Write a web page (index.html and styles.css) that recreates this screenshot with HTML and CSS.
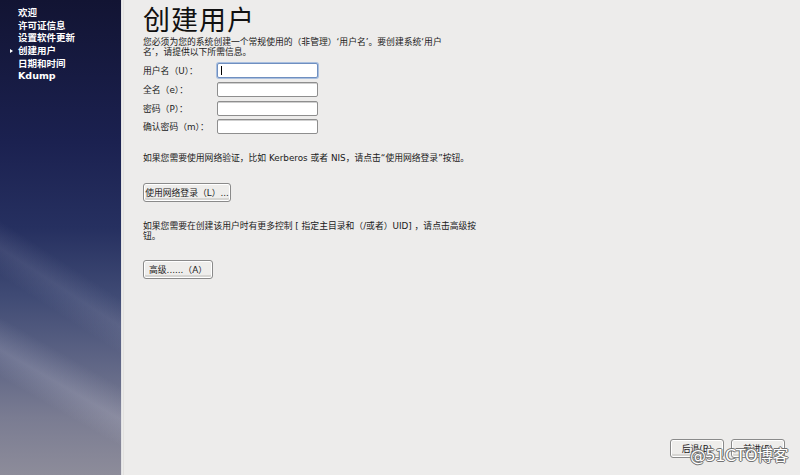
FILE: index.html
```
<!DOCTYPE html>
<html lang="zh-CN">
<head>
<meta charset="utf-8">
<title>创建用户</title>
<link rel="stylesheet" href="styles.css">
</head>
<body>
<div class="screen">
  <aside class="sidebar">
    <ul class="steps">
      <li class="step">欢迎</li>
      <li class="step">许可证信息</li>
      <li class="step">设置软件更新</li>
      <li class="step current">创建用户</li>
      <li class="step">日期和时间</li>
      <li class="step">Kdump</li>
    </ul>
  </aside>
  <div class="divider"></div>
  <main class="content">
    <h1 class="title">创建用户</h1>
    <p class="intro">您必须为您的系统创建一个常规使用的（非管理）‘用户名’。要创建系统‘用户<br>名’，请提供以下所需信息。</p>
    <div class="form">
      <div class="row"><label class="label">用户名（U）：</label><div class="input focus"><span class="caret"></span></div></div>
      <div class="row"><label class="label">全名（e）：</label><div class="input"></div></div>
      <div class="row"><label class="label">密码（P）：</label><div class="input"></div></div>
      <div class="row"><label class="label">确认密码（m）：</label><div class="input"></div></div>
    </div>
    <p class="note note-net">如果您需要使用网络验证，比如 Kerberos 或者 NIS，请点击“使用网络登录”按钮。</p>
    <div class="btn btn-net">使用网络登录（L）...</div>
    <p class="note note-adv">如果您需要在创建该用户时有更多控制 [ 指定主目录和（/或者）UID] ，请点击高级按<br>钮。</p>
    <div class="btn btn-adv">高级......（A）</div>
    <div class="nav">
      <div class="btn btn-nav">后退(B)</div>
      <div class="btn btn-nav">前进(F)</div>
    </div>
    <div class="watermark">@51CTO博客</div>
  </main>
</div>
</body>
</html>
```
FILE: styles.css
```
* { box-sizing: border-box; }
html, body { margin: 0; padding: 0; }
body {
  width: 800px;
  height: 475px;
  overflow: hidden;
  font-family: "DejaVu Sans", "Noto Sans CJK SC", sans-serif;
  background: #edeceb;
}
.screen {
  display: flex;
  width: 800px;
  height: 475px;
}
.sidebar {
  width: 121px;
  flex: none;
  background:
    linear-gradient(30deg, transparent 18%, rgba(205,205,220,0.20) 23%, transparent 29%),
    linear-gradient(33deg, transparent 36%, rgba(190,190,210,0.12) 41%, transparent 46%),
    linear-gradient(180deg, #121433 0%, #1b2150 30%, #263060 48%, #3f4a74 62%, #5c6384 75%, #7a7c92 88%, #8d8c9a 100%);
  padding-top: 7px;
}
.steps {
  list-style: none;
  margin: 0;
  padding: 0 0 0 18px;
}
.step {
  position: relative;
  color: #ffffff;
  font-weight: bold;
  font-size: 9.5px;
  line-height: 12.7px;
  height: 12.7px;
}
.step.current::before {
  content: "";
  position: absolute;
  left: -8px;
  top: 4px;
  border-left: 3px solid #ffffff;
  border-top: 2.5px solid transparent;
  border-bottom: 2.5px solid transparent;
}
.divider {
  width: 3px;
  flex: none;
  background: linear-gradient(90deg, #c9c9cc 0, #fbfbfb 1px, #dedddb 2px, #e6e5e3 3px);
}
.content {
  position: relative;
  flex: 1;
  display: flex;
  flex-direction: column;
  align-items: flex-start;
  padding: 1px 15px 17px 19px;
  color: #1a1a1a;
}
.title {
  margin: 0;
  font-family: "Noto Sans CJK SC", "DejaVu Sans", sans-serif;
  font-weight: normal;
  font-size: 27px;
  line-height: 35px;
  color: #111111;
  letter-spacing: 1px;
}
.intro {
  margin: 1px 0 0 0;
  font-size: 8.8px;
  line-height: 10px;
}
.form {
  margin-top: 6px;
  display: flex;
  flex-direction: column;
  gap: 3.8px;
}
.row {
  display: flex;
  align-items: center;
  height: 15px;
}
.label {
  width: 74px;
  font-size: 8.8px;
}
.input {
  position: relative;
  width: 101px;
  height: 15px;
  background: #ffffff;
  border: 1px solid #8e8e8e;
  border-radius: 2px;
  box-shadow: inset 0 1px 0 #cfcfcf;
}
.input.focus {
  border-color: #6f8fc0;
  box-shadow: 0 0 0 1px #a9bfdf;
}
.caret {
  position: absolute;
  left: 3px;
  top: 2px;
  width: 1px;
  height: 9px;
  background: #000;
}
.note {
  font-size: 8.8px;
  line-height: 10px;
  margin: 0;
}
.note-net { margin-top: 19px; }
.note-adv { margin-top: 19px; }
.btn {
  display: flex;
  align-items: center;
  justify-content: center;
  white-space: nowrap;
  height: 19px;
  padding: 0 4px;
  font-size: 8.8px;
  background: #eeedeb;
  border: 1px solid #8a8a8a;
  border-radius: 3px;
  box-shadow: inset 0 0 0 1px #ffffff, inset 0 -2px 0 1px #d6d5d2;
  color: #1a1a1a;
}
.btn-net { margin-top: 20px; width: 88px; }
.btn-adv { margin-top: 19px; width: 70px; }
.nav {
  margin-top: auto;
  align-self: flex-end;
  display: flex;
  gap: 7px;
}
.btn-nav { width: 54px; }
.watermark {
  position: absolute;
  right: 12px;
  bottom: 9px;
  font-family: "DejaVu Sans", "Noto Sans CJK SC", sans-serif;
  font-size: 16px;
  color: #ffffff;
  text-shadow: 0 0 1px #555, 1px 0 0 #777, -1px 0 0 #777, 0 1px 0 #777, 0 -1px 0 #777;
  letter-spacing: -0.5px;
}
```
